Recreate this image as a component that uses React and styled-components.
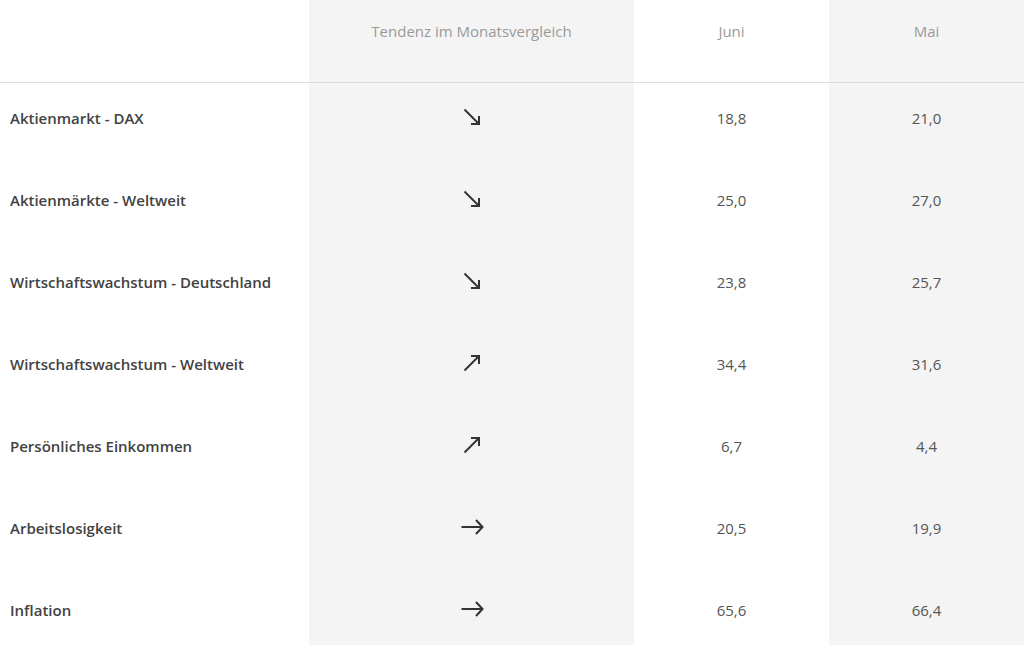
import React from "react";
import styled, { createGlobalStyle } from "styled-components";

const Global = createGlobalStyle`
  html, body { margin: 0; padding: 0; background: #fff; }
  body { font-family: "Open Sans", "Lato", sans-serif; overflow: hidden; }
`;

const Table = styled.div`
  display: grid;
  grid-template-columns: 309px 325px 195px 195px;
  width: 1024px;
`;

const HeadCell = styled.div`
  box-sizing: border-box;
  height: 83px;
  border-bottom: 1px solid #dcdcdc;
  background: ${(p) => (p.$shade ? "#f4f4f4" : "#fff")};
  color: #9a9a9a;
  font-size: 15px;
  text-align: center;
  padding-top: 22px;
  line-height: 18px;
`;

const Cell = styled.div`
  height: 82px;
  box-sizing: border-box;
  padding-top: 26px;
  line-height: 18px;
  font-size: 15px;
  background: ${(p) => (p.$shade ? "#f4f4f4" : "#fff")};
  display: flex;
  align-items: flex-start;
  justify-content: center;
  color: #555;
`;

const LabelCell = styled(Cell)`
  justify-content: flex-start;
  padding-left: 10px;
  font-weight: 600;
  color: #424242;
`;

const Icon = styled.svg`
  display: block;
  margin-top: ${(p) => p.$offset || 0}px;
  fill: none;
  stroke: #333;
  stroke-width: 2;
  stroke-linecap: butt;
  stroke-linejoin: miter;
`;

const Arrow = ({ dir }) => {
  if (dir === "down")
    return (
      <Icon width="20" height="20" viewBox="0 0 20 20" $offset={-2}>
        <path d="M2.5 2.5 L17 17" />
        <path d="M9 17 H17 V9" />
      </Icon>
    );
  if (dir === "up")
    return (
      <Icon width="20" height="20" viewBox="0 0 20 20" $offset={-2}>
        <path d="M2.5 17.5 L17 3" />
        <path d="M9 3 H17 V11" />
      </Icon>
    );
  return (
    <Icon width="24" height="18" viewBox="0 0 24 18" $offset={-1}>
      <path d="M1.5 9 H22" />
      <path d="M16 2 L22.5 9 L16 16" />
    </Icon>
  );
};

const rows = [
  ["Aktienmarkt - DAX", "down", "18,8", "21,0"],
  ["Aktienmärkte - Weltweit", "down", "25,0", "27,0"],
  ["Wirtschaftswachstum - Deutschland", "down", "23,8", "25,7"],
  ["Wirtschaftswachstum - Weltweit", "up", "34,4", "31,6"],
  ["Persönliches Einkommen", "up", "6,7", "4,4"],
  ["Arbeitslosigkeit", "right", "20,5", "19,9"],
  ["Inflation", "right", "65,6", "66,4"],
];

export default function App() {
  return (
    <>
      <Global />
      <Table>
        <HeadCell />
        <HeadCell $shade>Tendenz im Monatsvergleich</HeadCell>
        <HeadCell>Juni</HeadCell>
        <HeadCell $shade>Mai</HeadCell>
        {rows.map(([label, dir, juni, mai]) => (
          <React.Fragment key={label}>
            <LabelCell>{label}</LabelCell>
            <Cell $shade>
              <Arrow dir={dir} />
            </Cell>
            <Cell>{juni}</Cell>
            <Cell $shade>{mai}</Cell>
          </React.Fragment>
        ))}
      </Table>
    </>
  );
}
